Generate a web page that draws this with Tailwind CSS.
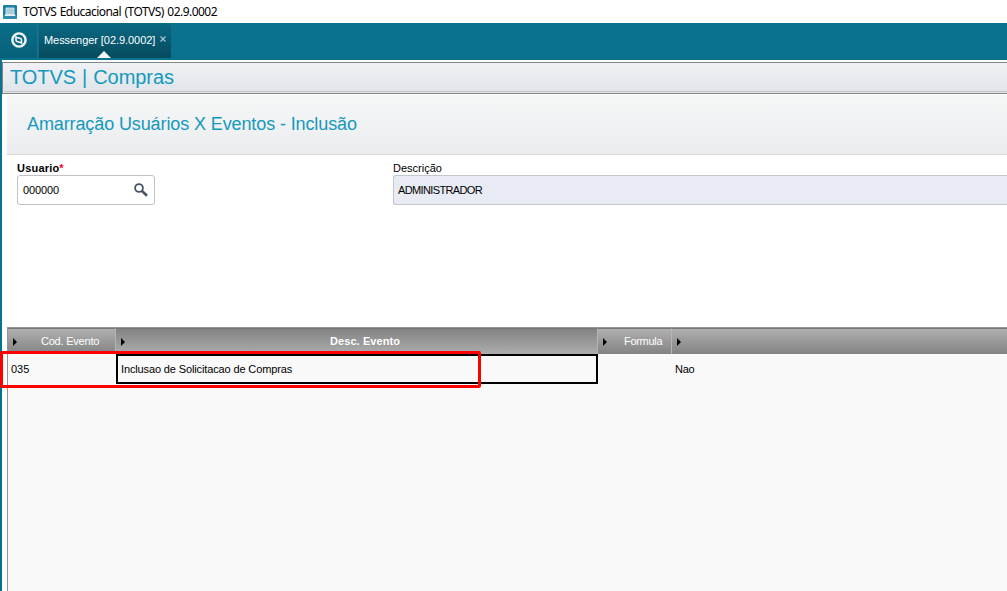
<!DOCTYPE html>
<html lang="pt-BR">
<head>
    <meta charset="UTF-8">
    <meta name="viewport" content="width=device-width, initial-scale=1.0">
    <title>TOTVS Educacional (TOTVS) 02.9.0002</title>
    <script src="https://cdn.jsdelivr.net/npm/@tailwindcss/browser@4"></script>
</head>
<body class="h-screen overflow-hidden bg-white font-['Liberation_Sans',sans-serif] text-[11px] text-black whitespace-nowrap">
    <div class="relative h-full flex flex-col">

        <!-- Window title -->
        <header class="h-[23px] shrink-0 flex items-center pl-[3px]">
            <svg class="w-[14px] h-[14px] shrink-0" viewBox="0 0 14 14">
                <rect width="14" height="14" rx="1" fill="#1f7f9f"/>
                <path d="M0 11h14v2a1 1 0 0 1-1 1H1a1 1 0 0 1-1-1z" fill="#2f8dab"/>
                <rect x="3" y="3" width="8" height="6" fill="#a5cddb"/>
                <path d="M3 9V3h8v6" fill="none" stroke="#d9edf4" stroke-width=".8"/>
                <path d="M2.5 9h9l1.200 2H1.300z" fill="#e0eff4"/>
            </svg>
            <span class="ml-[6px] font-['Noto_Sans','Open_Sans',sans-serif] text-[12px] tracking-[-0.53px] word-spacing-normal [word-spacing:0.8px]">TOTVS Educacional (TOTVS) 02.9.0002</span>
        </header>

        <!-- Tabs -->
        <nav class="h-[37px] shrink-0 flex bg-[#0a728f]">
            <div class="w-[38px] h-[35px] pl-[11px] pt-[9px] bg-linear-to-b from-[#0a6f8b] to-[#076079] border-r border-[#1d7389]">
                <svg class="w-[16px] h-[16px]" viewBox="0 0 16 16" fill="none" stroke="#f2f7f9">
                    <circle cx="8" cy="8" r="6.6" stroke-width="2.4"/>
                    <path d="M5 4v4.200q0 1 1 1.300l5 1.500M4.500 5l5 1.500q1 .3 1 1.300V12" stroke-width="1.6"/>
                </svg>
            </div>
            <div class="relative w-[132px] h-[35px] ml-px pl-[5px] flex items-center bg-linear-to-b from-[#096a84] to-[#064b5e] text-white">
                <span class="tracking-[-0.06px]">Messenger [02.9.0002]</span>
                <svg class="absolute left-[121px] top-[13px] w-[6px] h-[6px]" viewBox="0 0 6 6" stroke="#a9cbd4" stroke-width="1.1"><path d="M.5.5l5 5M5.5.5l-5 5"/></svg>
                <svg class="absolute left-[58px] bottom-0 w-[14px] h-[7px]" viewBox="0 0 14 7"><path d="M7 0l7 7H0z" fill="#f3f6f8"/></svg>
            </div>
        </nav>

        <div class="grow min-h-0 flex flex-col border-l-2 border-[#0a728f]">
            <div class="h-[34px] mt-[2px] shrink-0 pb-[2px]">
                <div class="h-[32px] pl-[7px] border border-r-0 border-[#858585] bg-linear-to-b from-[#eff1f4] to-[#e0e4e9]">
                    <h1 class="h-[29px] -ml-[6px] pl-[6px] leading-[28px] text-[20px] text-[#1499bd] tracking-[-0.05px] [word-spacing:0.5px] border-b border-[#c2c5c9]">TOTVS | Compras</h1>
                </div>
            </div>

            <main class="grow min-h-0 ml-[5px] flex flex-col">
                <h2 class="-mt-px h-[60px] shrink-0 pl-[20px] leading-[58px] text-[18px] text-[#1499bd] tracking-[-0.11px] border-b border-[#d5d7d9] bg-linear-to-b from-[#f5f7f7] to-[#ebecef]">Amarração Usuários X Eventos - Inclusão</h2>

                <form class="h-[172px] shrink-0 flex pl-[10px] pt-[7px]">
                    <div class="w-[376px]">
                        <label class="block h-[13px] leading-[13px] font-bold tracking-[0.2px]">Usuario<span class="text-[#f00020]">*</span></label>
                        <div class="w-[138px] h-[30px] pl-[5px] pr-[6px] flex items-center justify-between rounded-[3px] border border-[#bfc3c7]">
                            <span class="tracking-[-0.12px]">000000</span>
                            <svg class="w-[14px] h-[14px]" viewBox="0 0 14 14" fill="none" stroke="#465565">
                                <circle cx="5" cy="5" r="3.9" stroke-width="1.8"/>
                                <path d="M8 8l5 4.700" stroke-width="2.6"/>
                            </svg>
                        </div>
                    </div>
                    <div class="grow">
                        <label class="block h-[13px] leading-[13px]">Descrição</label>
                        <div class="h-[30px] pl-[4px] flex items-center rounded-l-[3px] border border-r-0 border-[#c3c6cb] bg-[#e8ebf3] tracking-[-0.63px]">ADMINISTRADOR</div>
                    </div>
                </form>

                <div class="grow border-l border-[#969696] bg-[#f9f9f9]">
                    <div class="h-[27px] flex border-t border-[#969696] text-white">
                        <div class="w-[108px] flex items-center border-t border-r border-t-[#777] border-r-[#b5b5b5] bg-linear-to-b from-[#b0b0b0] to-[#838383]">
                            <svg class="ml-[5px] mt-px w-[4px] h-[8px]" viewBox="0 0 4 8"><path d="M0 0l4 4-4 4z"/></svg>
                            <span class="ml-[24px] tracking-[-0.22px]">Cod. Evento</span>
                        </div>
                        <div class="w-[482px] flex items-center border-t border-r border-t-[#777] border-r-[#b5b5b5] bg-linear-to-b from-[#838383] to-[#adadad]">
                            <svg class="ml-[5px] mt-px w-[4px] h-[8px]" viewBox="0 0 4 8"><path d="M0 0l4 4-4 4z"/></svg>
                            <span class="ml-[205px] font-bold tracking-[0.08px]">Desc. Evento</span>
                        </div>
                        <div class="w-[74px] flex items-center border-t border-r border-t-[#777] border-r-[#b5b5b5] bg-linear-to-b from-[#b0b0b0] to-[#838383]">
                            <svg class="ml-[5px] mt-px w-[4px] h-[8px]" viewBox="0 0 4 8"><path d="M0 0l4 4-4 4z"/></svg>
                            <span class="ml-[17px] tracking-[-0.3px]">Formula</span>
                        </div>
                        <div class="grow flex items-center border-t border-[#777] bg-linear-to-b from-[#b0b0b0] to-[#838383]">
                            <svg class="ml-[5px] mt-px w-[4px] h-[8px]" viewBox="0 0 4 8"><path d="M0 0l4 4-4 4z"/></svg>
                        </div>
                    </div>
                    <div class="h-[30px] flex leading-[30px]">
                        <div class="w-[108px] pl-[3px]">035</div>
                        <div class="w-[482px] pl-[3px] leading-[26px] tracking-[-0.13px] border-2 border-black">Inclusao de Solicitacao de Compras</div>
                        <div class="w-[74px]"></div>
                        <div class="pl-[3px] tracking-[-0.3px]">Nao</div>
                    </div>
                </div>
            </main>
        </div>

        <!-- Highlight over the selected row -->
        <div class="absolute left-0 top-[351px] w-[481px] h-[37px] rounded-[2px] border-3 border-[#fd0000]"></div>
    </div>
</body>
</html>
